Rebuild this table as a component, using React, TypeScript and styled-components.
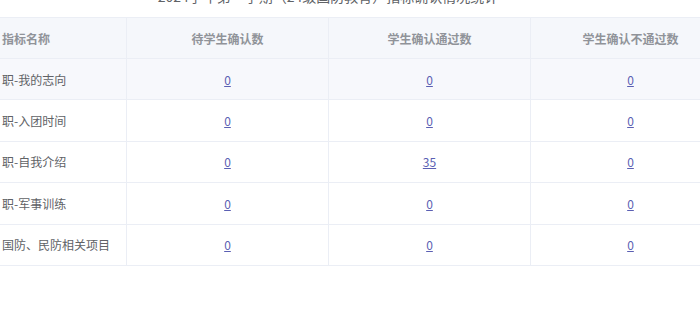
import React from "react";
import styled, { createGlobalStyle } from "styled-components";

const Global = createGlobalStyle`
  html, body { margin: 0; padding: 0; background: #ffffff; }
  body { font-family: "Noto Sans CJK SC", "Noto Sans", sans-serif; overflow: hidden; }
`;

const Page = styled.div`
  width: 700px;
  height: 309px;
  overflow: hidden;
  background: #ffffff;
`;

const Title = styled.div`
  margin-top: -14px;
  height: 20px;
  line-height: 20px;
  font-size: 14px;
  color: #606266;
  text-align: center;
  padding-right: 44px;
  margin-bottom: 11px;
  white-space: nowrap;
`;

const Grid = styled.div`
  display: grid;
  grid-template-columns: 127px 202px 202px 200px;
  grid-template-rows: 42px repeat(5, 41.4px);
  width: 731px;
`;

const Cell = styled.div<{ $head?: boolean; $hl?: boolean; $left?: boolean }>`
  display: flex;
  align-items: center;
  justify-content: ${(p) => (p.$left ? "flex-start" : "center")};
  padding-left: ${(p) => (p.$left ? "2px" : "0")};
  box-sizing: border-box;
  border-bottom: 1px solid #ebeef5;
  border-right: 1px solid #ebeef5;
  border-top: ${(p) => (p.$head ? "1px solid #ebeef5" : "none")};
  background: ${(p) => (p.$head ? "#f5f7fb" : p.$hl ? "#f7f8fc" : "#ffffff")};
  font-size: 12px;
  color: ${(p) => (p.$head ? "#909399" : "#606266")};
  font-weight: ${(p) => (p.$head ? 600 : 400)};
  white-space: nowrap;
  overflow: hidden;
`;

const Num = styled.a`
  color: #5b5fb3;
  text-decoration: underline;
  font-size: 12px;
  cursor: pointer;
`;

const headers = ["指标名称", "待学生确认数", "学生确认通过数", "学生确认不通过数"];
const rows: [string, number, number, number][] = [
  ["职-我的志向", 0, 0, 0],
  ["职-入团时间", 0, 0, 0],
  ["职-自我介绍", 0, 35, 0],
  ["职-军事训练", 0, 0, 0],
  ["国防、民防相关项目", 0, 0, 0],
];

export default function App() {
  return (
    <Page>
      <Global />
      <Title>2024学年第一学期（24级国防教育）指标确认情况统计</Title>
      <Grid>
        {headers.map((h, i) => (
          <Cell key={h} $head $left={i === 0}>
            {h}
          </Cell>
        ))}
        {rows.map((r, ri) => (
          <React.Fragment key={r[0]}>
            <Cell $left $hl={ri === 0}>{r[0]}</Cell>
            <Cell $hl={ri === 0}><Num>{r[1]}</Num></Cell>
            <Cell $hl={ri === 0}><Num>{r[2]}</Num></Cell>
            <Cell $hl={ri === 0}><Num>{r[3]}</Num></Cell>
          </React.Fragment>
        ))}
      </Grid>
    </Page>
  );
}
